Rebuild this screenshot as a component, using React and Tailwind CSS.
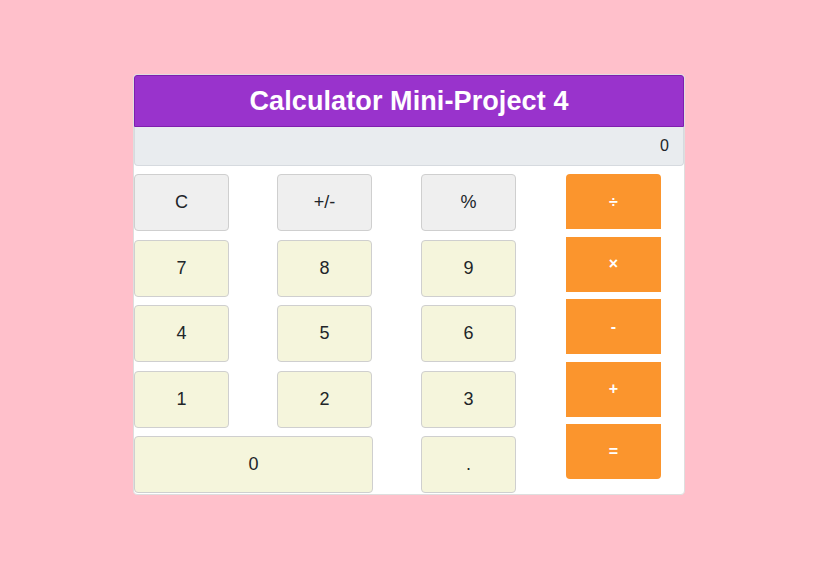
import { useState } from "react";

const font = { fontFamily: '"Liberation Sans", Arial, sans-serif' };

const Key = ({ label, wide, gray, onClick }) => (
  <button
    onClick={() => onClick(label)}
    className={`${wide ? "col-span-2 w-[239px]" : "w-[95px]"} h-[57px] rounded-[4px] border border-[#cfcfcf] text-[18px] text-[#212529] ${
      gray ? "bg-[#efefef]" : "bg-[#f5f5dc]"
    }`}
  >
    {label}
  </button>
);

export default function App() {
  let [value, setValue] = useState("0");

  function press(key) {
    if (key === "C") return setValue("0");
    if (/[0-9]/.test(key)) return setValue(value === "0" ? key : value + key);
    if (key === ".") return setValue(value.includes(".") ? value : value + ".");
  }

  let ops = ["÷", "×", "-", "+", "="];

  return (
    <div style={font} className="w-[839px] h-[583px] bg-[#ffc0cb] pt-[74px] pl-[133px]">
      <div className="w-[552px] h-[421px] bg-white rounded-[4px] border border-[#dedede] flex flex-col">
        <div className="h-[52px] bg-[#9933cc] border border-[#7f1fae] rounded-t-[3px] flex items-center justify-center">
          <h1 className="text-white text-[27px] font-bold tracking-[0.1px]">
            Calculator Mini-Project 4
          </h1>
        </div>
        <div className="h-[39px] bg-[#e9ecef] border border-[#d6dadf] border-t-0 rounded-b-[4px] flex items-center justify-end pr-[14px] text-[16px] text-[#212529]">
          {value}
        </div>
        <div className="flex pt-[8px]">
          <div className="w-[432px] grid grid-cols-[143px_144px_145px] gap-y-[8.5px]">
            <Key label="C" gray onClick={press} />
            <Key label="+/-" gray onClick={press} />
            <Key label="%" gray onClick={press} />
            {["7", "8", "9", "4", "5", "6", "1", "2", "3"].map((k) => (
              <Key key={k} label={k} onClick={press} />
            ))}
            <Key label="0" wide onClick={press} />
            <Key label="." onClick={press} />
          </div>
          <div className="w-[95px] flex flex-col gap-[7.5px]">
            {ops.map((op, i) => (
              <button
                key={op}
                className={`h-[55px] bg-[#fb952d] text-white font-bold text-[16px] ${
                  i === 0 ? "rounded-t-[4px]" : ""
                } ${i === ops.length - 1 ? "rounded-b-[4px]" : ""}`}
              >
                {op}
              </button>
            ))}
          </div>
        </div>
      </div>
    </div>
  );
}
